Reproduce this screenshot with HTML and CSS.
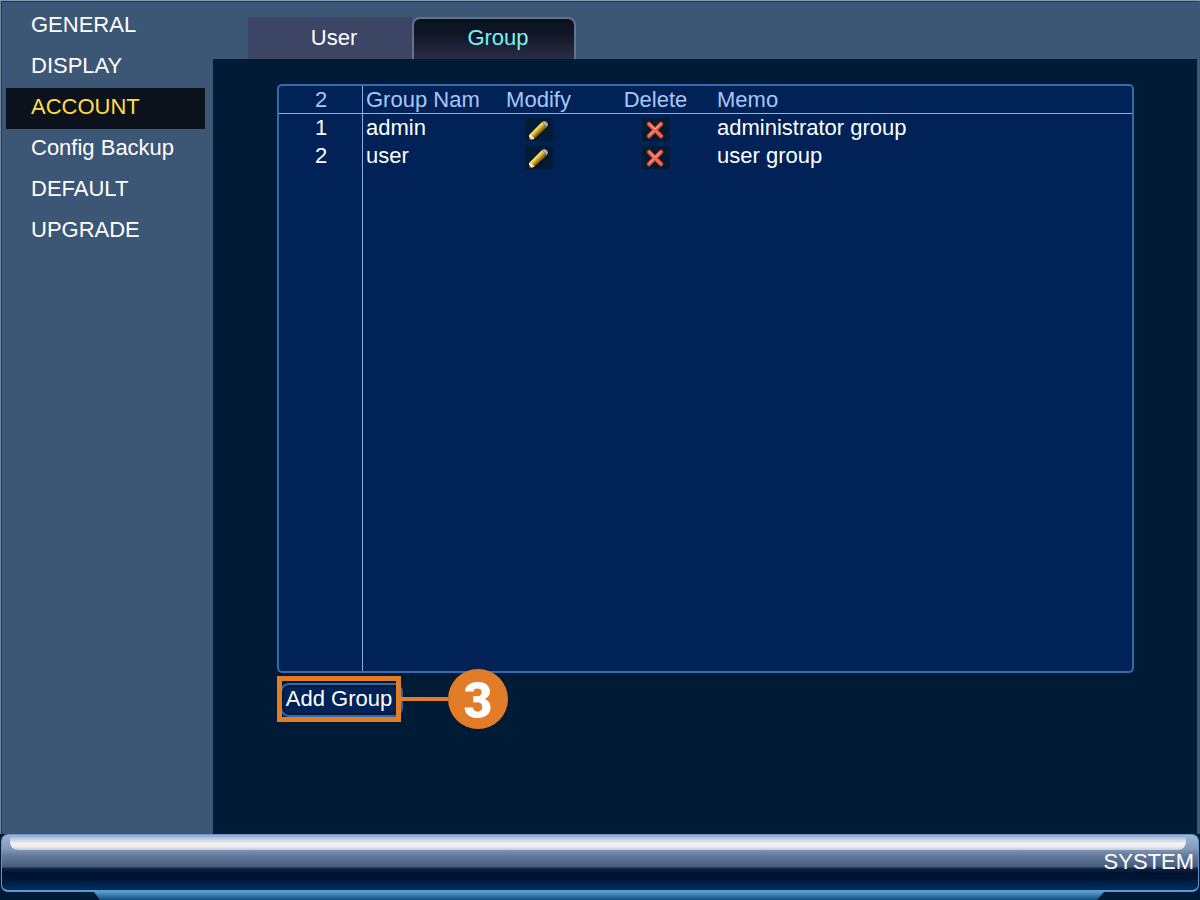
FILE: index.html
```html
<!DOCTYPE html>
<html lang="en">
  <head>
    <meta charset="UTF-8" />
    <meta name="viewport" content="width=device-width, initial-scale=1.0" />
    <title>SYSTEM</title>
    <link rel="stylesheet" href="styles.css">
  </head>
  <body>
    <!-- shared icons -->
    <svg class="symbols" aria-hidden="true">
      <defs>
        <linearGradient id="wood" gradientUnits="userSpaceOnUse" x1="9" y1="10" x2="14" y2="15">
          <stop offset="0" stop-color="#fff9b8" />
          <stop offset="0.45" stop-color="#f2d23c" />
          <stop offset="1" stop-color="#8c6a10" />
        </linearGradient>
      </defs>
      <symbol id="pencil" viewBox="0 0 28 23">
        <path d="M3 18 L18 3 L21 3 L24 6 L23 9 L9 22 L4 22 Z" fill="#0c0c10" />
        <path d="M4 17 L17 4 L22 9 L9 21 Z" fill="url(#wood)" />
        <path d="M17 4 L19 3 L22 4 L23 7 L22 9 Z" fill="#b4b4c2" />
        <path d="M20 3 L23 5 L23 7 Z" fill="#b0524a" />
        <path d="M4 17 L6 17 L9 20 L9 21 L6 22 L4 21 Z" fill="#ffe3c4" />
        <path d="M4 19 L7 22 L4 22 Z" fill="#8a3a20" />
      </symbol>
      <symbol id="cross" viewBox="0 0 28 23">
        <path d="M7 6 L19 18 M19 6 L7 18" stroke="#a52f20" stroke-width="5" stroke-linecap="round" />
        <path d="M7 6 L19 18 M19 6 L7 18" stroke="#ee6f55" stroke-width="3" stroke-linecap="round" />
        <path d="M7 5 L13 11 L19 5 M7 17 L11 13" stroke="#ffb09a" stroke-width="1" fill="none" />
      </symbol>
    </svg>

    <div class="screen">
      <nav class="sidebar">
        <a href="#">GENERAL</a>
        <a href="#">DISPLAY</a>
        <a href="#" class="active">ACCOUNT</a>
        <a href="#">Config Backup</a>
        <a href="#">DEFAULT</a>
        <a href="#">UPGRADE</a>
      </nav>

      <div class="content">
        <div class="tabs">
          <button type="button" class="tab">User</button>
          <button type="button" class="tab tab-active">Group</button>
        </div>

        <main class="page">
          <div class="list">
            <table class="groups">
              <thead>
                <tr>
                  <th class="col-index">2</th>
                  <th class="col-name">Group Nam</th>
                  <th class="col-action">Modify</th>
                  <th class="col-action">Delete</th>
                  <th class="col-memo">Memo</th>
                </tr>
              </thead>
              <tbody>
                <tr>
                  <td class="col-index">1</td>
                  <td>admin</td>
                  <td class="col-action">
                    <button type="button" class="icon" aria-label="Modify admin"><svg><use href="#pencil" /></svg></button>
                  </td>
                  <td class="col-action">
                    <button type="button" class="icon" aria-label="Delete admin"><svg><use href="#cross" /></svg></button>
                  </td>
                  <td>administrator group</td>
                </tr>
                <tr>
                  <td class="col-index">2</td>
                  <td>user</td>
                  <td class="col-action">
                    <button type="button" class="icon" aria-label="Modify user"><svg><use href="#pencil" /></svg></button>
                  </td>
                  <td class="col-action">
                    <button type="button" class="icon" aria-label="Delete user"><svg><use href="#cross" /></svg></button>
                  </td>
                  <td>user group</td>
                </tr>
              </tbody>
            </table>
          </div>

          <div class="actions">
            <button type="button" class="add-group">Add Group</button>
            <!-- step marker over the button -->
            <div class="callout">
              <span class="callout-box"></span>
              <span class="callout-line"></span>
              <span class="callout-number">3</span>
            </div>
          </div>
        </main>
      </div>
    </div>

    <footer class="footer">
      <div class="titlebar">
        <div class="shine"></div>
        <div class="title">SYSTEM</div>
      </div>
      <div class="stand"></div>
    </footer>
  </body>
</html>
```
FILE: styles.css
```css
* {
  box-sizing: border-box;
}

body {
  margin: 0;
  min-height: 100vh;
  display: flex;
  flex-direction: column;
  background-color: #001b35;
  color: #fff;
  font-family: "Liberation Sans", Arial, sans-serif;
  font-size: 22px;
  line-height: 28px;
}

button {
  padding: 0;
  border: none;
  background: none;
  color: inherit;
  font: inherit;
  cursor: pointer;
}

.symbols {
  position: absolute;
  width: 0;
  height: 0;
}

.screen {
  flex: 1;
  display: flex;
  background-color: #3c5676;
  border-top: 1px solid #8297aa;
  border-left: 1px solid #71879e;
  box-shadow: inset 1px 1px 0 #193b63;
}

/* left menu */
.sidebar {
  width: 212px;
  padding: 5px 8px 0 5px;
}
.sidebar a {
  display: block;
  height: 41px;
  padding-left: 25px;
  line-height: 38px;
  color: #fff;
  text-decoration: none;
}
.sidebar a.active {
  background-color: #0b121c;
  color: #ffdf45;
}

.content {
  flex: 1;
  display: flex;
  flex-direction: column;
  border-right: 3px solid #3c5676;
}

.tabs {
  display: flex;
  padding: 16px 0 0 35px;
}
.tab {
  width: 164px;
  height: 42px;
  padding-left: 8px;
  background-color: #3c4564;
}
.tab-active {
  padding-bottom: 2px;
  border: 2px solid #66748a;
  border-bottom: none;
  border-radius: 8px 8px 0 0;
  background: linear-gradient(#0a1220, #101625 40%, #1b2135 65%, #292d45);
  color: #78f3f0;
}

/* group list */
.page {
  flex: 1;
  display: flex;
  flex-direction: column;
  padding: 25px 63px 111px 64px;
  background-color: #001b35;
}
.list {
  flex: 1;
  border: 2px solid #386ab2;
  border-radius: 5px;
  background: linear-gradient(#8eafe3, #8eafe3) 83px 0 / 1px 100% no-repeat #002256;
}
.groups {
  width: 100%;
  table-layout: fixed;
  border-collapse: separate;
  border-spacing: 0;
}
.groups th,
.groups td {
  height: 28px;
  padding: 0 0 0 3px;
  text-align: left;
  white-space: nowrap;
}
.groups th {
  border-bottom: 1px solid #8eafe3;
  color: #a9c6fa;
  font-weight: normal;
  line-height: 27px;
}
.groups .col-index {
  width: 84px;
  padding: 0;
  text-align: center;
}
.groups .col-name {
  width: 117px;
}
.groups .col-action {
  width: 117px;
  padding: 0;
  text-align: center;
}
.icon {
  display: block;
  width: 28px;
  height: 23px;
  margin: 2px auto 0;
  background-color: #001b35;
}
.icon svg {
  display: block;
  width: 28px;
  height: 23px;
}

/* add button and its marker */
.actions {
  position: relative;
  height: 50px;
  padding: 10px 0 0 3px;
}
.add-group {
  display: block;
  width: 123px;
  height: 34px;
  padding: 0 5px 2px 0;
  border: 2px solid #3569af;
  border-radius: 9px;
  background-color: #002256;
  box-shadow: inset 0 0 0 2px #001b35;
  line-height: 26px;
}
.callout {
  position: absolute;
  top: -4px;
  left: 0;
  display: flex;
  align-items: center;
  pointer-events: none;
}
.callout-box {
  width: 124px;
  height: 46px;
  border: 5px solid #e37c26;
}
.callout-line {
  width: 47px;
  height: 4px;
  background-color: #e37c26;
}
.callout-number {
  width: 60px;
  height: 60px;
  border-radius: 50%;
  background-color: #e37c26;
  font-family: Roboto, sans-serif;
  font-size: 50px;
  font-weight: 900;
  line-height: 64px;
  text-align: center;
}

/* bottom bar */
.titlebar {
  height: 58px;
  margin: 0 1px;
  padding: 2px 12px 0 8px;
  border: 1px solid #6795c8;
  border-bottom: 2px solid #5c9ad6;
  border-radius: 7px;
  background: linear-gradient(#a0b4d0, #8299ba 14px, #657ca0 20px, #465a7b 32px, #12294a 33px, #001230 38px, #001636 44px, #003063);
}
.shine {
  height: 13px;
  border-radius: 2px 2px 8px 8px;
  background: linear-gradient(#a9bdd8, #f1f2f3 50%, #ededed 75%, #c2cbd8);
}
.title {
  margin-right: -8px;
  line-height: 24px;
  text-align: right;
}
.stand {
  height: 8px;
  margin: 0 96px 0 94px;
  background: linear-gradient(#5899ca, #0f4f80);
  clip-path: polygon(0 0, 100% 0, calc(100% - 7px) 100%, 6px 100%);
}
```
